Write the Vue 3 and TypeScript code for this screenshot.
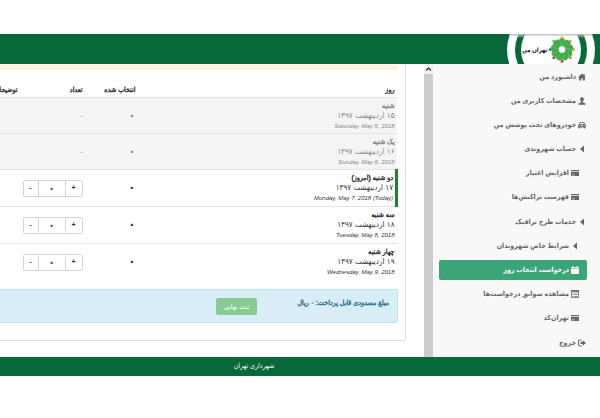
<script setup lang="ts">
import { ref } from 'vue'

type IconName = 'home' | 'user' | 'car' | 'caret' | 'card' | 'calendar' | 'list' | 'exit'

interface MenuItem {
  label: string
  icon: IconName
  nested?: boolean
  active?: boolean
  spaced?: boolean
}

interface DayRow {
  name: string
  date: string
  english: string
  state: 'past' | 'today' | 'open'
}

const menu: MenuItem[] = [
  { label: 'داشبورد من', icon: 'home' },
  { label: 'مشخصات کاربری من', icon: 'user' },
  { label: 'خودروهای تحت پوشش من', icon: 'car' },
  { label: 'حساب شهروندی', icon: 'caret' },
  { label: 'افزایش اعتبار', icon: 'card', nested: true },
  { label: 'فهرست تراکنش‌ها', icon: 'card', nested: true },
  { label: 'خدمات طرح ترافیک', icon: 'caret', spaced: true },
  { label: 'شرایط خاص شهروندان', icon: 'caret', nested: true },
  { label: 'درخواست انتخاب روز', icon: 'calendar', nested: true, active: true },
  { label: 'مشاهده سوابق درخواست‌ها', icon: 'list', nested: true },
  { label: 'تهران‌کد', icon: 'card', nested: true },
  { label: 'خروج', icon: 'exit', spaced: true },
]

const icons: Record<IconName, string> = {
  home: 'M8 1 0 8.5h2.2V15h4.3v-4.5h3V15h4.3V8.5H16l-2.8-2.7V2h-2.2v1.8z',
  user: 'M8 0.5c-2.6 0-3.8 1.9-3.6 4.3.2 2 .9 3.5 2 4.4v1.5L1 12.8V15.5h14v-2.7l-5.4-2.1V9.2c1.1-.9 1.8-2.4 2-4.4.2-2.4-1-4.3-3.6-4.3z',
  car: 'M3.8 2h8.4l1.7 4.5 2.1 1.3v5h-1.5V15h-2.8v-2.2H4.3V15H1.5v-2.2H0v-5l2.1-1.3zM5 3.7 4 6.5h8l-1-2.8zM3 8.4a1.2 1.2 0 1 0 .01 0zM13 8.4a1.2 1.2 0 1 0 .01 0zM5.5 9v1.5h5V9z',
  caret: 'M12 1v14L4 8z',
  card: 'M0 2h16v2.4H0zM0 6h16v8H0zM2 11v1.5h5V11z',
  calendar: 'M0 2.5h3V0h2v2.5h6V0h2v2.5h3V5H0zM0 6.2h16V16H0z',
  list: 'M0 0h16v16H0zM1.5 3.5v11h13v-11zM3 5h2v2H3zM6.5 5H13v1.5H6.5zM3 8.5h2v2H3zM6.5 8.5H13V10H6.5zM3 12h2v1.5H3zM6.5 12H13v1.5H6.5z',
  exit: 'M7 1H3.5A3.5 3.5 0 0 0 0 4.5v7A3.5 3.5 0 0 0 3.5 15H7v-2H3.5A1.5 1.5 0 0 1 2 11.5v-7A1.5 1.5 0 0 1 3.5 3H7zM9.5 2.5 16 8l-6.5 5.5V10H5V6h4.5z',
}

const days: DayRow[] = [
  { name: 'شنبه', date: '۱۵ اردیبهشت ۱۳۹۷', english: 'Saturday, May 5, 2018', state: 'past' },
  { name: 'یک شنبه', date: '۱۶ اردیبهشت ۱۳۹۷', english: 'Sunday, May 6, 2018', state: 'past' },
  { name: 'دو شنبه (امروز)', date: '۱۷ اردیبهشت ۱۳۹۷', english: 'Monday, May 7, 2018 (Today)', state: 'today' },
  { name: 'سه شنبه', date: '۱۸ اردیبهشت ۱۳۹۷', english: 'Tuesday, May 8, 2018', state: 'open' },
  { name: 'چهار شنبه', date: '۱۹ اردیبهشت ۱۳۹۷', english: 'Wednesday, May 9, 2018', state: 'open' },
]

const counts = ref<number[]>(days.map(() => 0))

const toPersian = (n: number): string => String(n).replace(/\d/g, (d) => '۰۱۲۳۴۵۶۷۸۹'[Number(d)])

function change(index: number, step: number): void {
  counts.value[index] = Math.max(0, counts.value[index] + step)
}

const petals = [0, 40, 80, 120, 160, 200, 240, 280, 320]
const dots = [
  { angle: 0, color: '#e8b52c' },
  { angle: 45, color: '#f0a02c' },
  { angle: 90, color: '#e0a53a' },
  { angle: 135, color: '#e8742a' },
  { angle: 180, color: '#d83a2e' },
  { angle: 225, color: '#8a4a9c' },
  { angle: 270, color: '#3a70b8' },
  { angle: 315, color: '#45b5c4' },
]
</script>

<template>
  <div class="page" dir="rtl">
    <header class="topbar">
      <svg class="brand" viewBox="0 0 88 30" role="img" aria-label="تهران من">
        <defs>
          <linearGradient id="edge" x1="0" y1="0" x2="0" y2="1">
            <stop offset="0" stop-color="#b4b4b4" />
            <stop offset="1" stop-color="#ffffff" stop-opacity="0" />
          </linearGradient>
          <clipPath id="disc"><circle cx="44" cy="16" r="44" /></clipPath>
        </defs>
        <circle cx="44" cy="16" r="44" fill="#fff" />
        <circle cx="44" cy="16" r="36" fill="#076839" />
        <circle cx="44" cy="16" r="30" fill="#fff" />
        <rect width="88" height="4" fill="url(#edge)" clip-path="url(#disc)" />
        <text class="brand-text" x="28" y="18" text-anchor="middle">تهران من</text>
        <g transform="translate(55 15.5)">
          <circle
            v-for="d in dots" :key="d.angle" cx="0" cy="-11.7" r="1.5"
            :fill="d.color" :transform="`rotate(${d.angle})`"
          />
          <path
            v-for="p in petals" :key="p" :transform="`rotate(${p})`"
            d="M-1-2.5C-5.500-4-5.500-9.500-1-11.300 4-11.500 5.500-7.500 2-3.500z" fill="#43ac49" stroke="#8fd08e" stroke-width=".3"
          />
          <circle r="3.2" fill="#fff" />
        </g>
      </svg>
    </header>

    <div class="body">
      <nav class="sidebar">
        <a
          v-for="item in menu" :key="item.label" href="#" class="item"
          :class="{ nested: item.nested, active: item.active, spaced: item.spaced }"
        >
          <svg class="icon" viewBox="0 0 16 16" aria-hidden="true">
            <path :d="icons[item.icon]" fill="currentColor" fill-rule="evenodd" />
          </svg>
          <span>{{ item.label }}</span>
        </a>
      </nav>

      <div class="scrollbar" aria-hidden="true">
        <svg class="up" viewBox="0 0 9 9"><path d="M2 6l2.5-2.5L7 6" fill="none" stroke="#444" stroke-width="1.5" /></svg>
        <div class="thumb"></div>
      </div>

      <main class="main">
        <section class="card">
          <div class="notice"></div>
          <table class="days">
            <thead>
              <tr>
                <th class="c-day">روز</th>
                <th class="c-selected">انتخاب شده</th>
                <th class="c-count">تعداد</th>
                <th class="c-note">توضیحات</th>
              </tr>
            </thead>
            <tbody>
              <tr v-for="(day, i) in days" :key="day.english" :class="day.state">
                <td class="day">
                  <strong>{{ day.name }}</strong>
                  <span>{{ day.date }}</span>
                  <em dir="ltr">{{ day.english }}</em>
                </td>
                <td class="num">۰</td>
                <td>
                  <template v-if="day.state === 'past'">-</template>
                  <div v-else class="stepper">
                    <button type="button" aria-label="افزایش" @click="change(i, 1)">+</button>
                    <input type="text" readonly :value="toPersian(counts[i])" :aria-label="day.name" />
                    <button type="button" class="minus" aria-label="کاهش" @click="change(i, -1)">-</button>
                  </div>
                </td>
                <td></td>
              </tr>
            </tbody>
          </table>
          <div class="total">
            <strong>مبلغ مسدودی قابل پرداخت: ۰ ریال</strong>
            <button type="button" class="submit">ثبت نهایی</button>
          </div>
        </section>
      </main>
    </div>

    <footer class="footer">شهرداری تهران</footer>
  </div>
</template>

<style>
body {
  background: #fff;
}
</style>

<style scoped>
.page {
  padding: 34px 0 42px;
  overflow: hidden;
  font-family: "Liberation Sans", "DejaVu Sans Condensed", "DejaVu Sans", sans-serif;
  font-size: 7px;
  line-height: 10px;
  color: #333;
}
.page * {
  box-sizing: border-box;
}
button,
input {
  font: inherit;
}
.topbar {
  display: flex;
  height: 30px;
  padding-right: 5px;
  background: #076839;
}
.brand {
  width: 88px;
  height: 30px;
}
.brand-text {
  font-size: 6px;
  font-weight: bold;
  fill: #111;
}
.body {
  display: flex;
}
.sidebar {
  flex: none;
  width: 167px;
  padding: 3px 13px 0 6px;
  background: #f8f8f8;
}
.item {
  display: flex;
  align-items: center;
  gap: 2px;
  height: 20px;
  margin-bottom: 4px;
  padding-right: 1px;
  border-radius: 2px;
  color: #666;
  font-weight: bold;
  text-decoration: none;
  white-space: nowrap;
}
.item:last-child {
  margin-bottom: 0;
}
.item.spaced {
  margin-top: 5px;
}
.item.nested {
  padding-right: 8px;
}
.item.active {
  background: #3ba579;
  color: #fff;
}
.icon {
  flex: none;
  width: 8px;
  height: 8px;
}
.scrollbar {
  display: flex;
  flex: none;
  flex-direction: column;
  width: 9px;
  background: #f1f1f1;
}
.up {
  width: 9px;
  height: 10px;
}
.thumb {
  flex: 1;
  background: #cdcdcd;
}
.main {
  flex: 1;
  min-width: 0;
  padding: 0 18px 16px 0;
  overflow: hidden;
}
.card {
  padding: 1px 7px 17px 0;
  border: solid #ddd;
  border-width: 0 1px 1px 0;
  border-radius: 0 0 3px 0;
}
.notice {
  height: 5px;
  background: #fcf4dc;
}
.days {
  width: 480px;
  margin-top: 10px;
  border-collapse: collapse;
  table-layout: fixed;
}
th,
.day strong,
.total strong {
  font-weight: normal;
  -webkit-text-stroke: 0.4px currentColor;
}
th {
  height: 17px;
  padding: 3px 2px 0;
  text-align: right;
  vertical-align: middle;
  white-space: nowrap;
}
.c-day {
  width: 259px;
}
.c-selected {
  width: 53px;
}
.c-count {
  width: 65px;
}
td {
  height: 37px;
  padding: 2px 2px 1px;
  border-top: 1px solid #e3e3e3;
  vertical-align: middle;
}
.past {
  background: #f4f4f4;
  color: #888;
}
.past td {
  height: 36px;
}
.today .day {
  border-right: 3px solid #1c8425;
}
.day strong,
.day span,
.day em {
  display: block;
}
.day span {
  font-size: 8px;
}
.day em {
  font-size: 6px;
  text-align: right;
}
.num {
  font-size: 13px;
  font-weight: bold;
}
.stepper {
  display: flex;
  width: 60px;
  height: 17px;
  border: 1px solid #d4d4d4;
  border-radius: 2px;
}
.stepper button {
  flex: none;
  width: 16px;
  padding: 0;
  border: 0;
  background: #fff;
  color: #333;
  font-weight: bold;
}
.stepper .minus {
  width: 14px;
}
.stepper input {
  flex: 1;
  min-width: 0;
  padding: 0;
  border: solid #d4d4d4;
  border-width: 0 1px;
  background: #fff;
  color: #555;
  font-size: 13px;
  font-weight: bold;
  text-align: center;
}
.total {
  display: flex;
  justify-content: space-between;
  height: 34px;
  margin-top: 9px;
  padding: 8px 8px 8px 216px;
  border: solid #bfe3ee;
  border-width: 1px 1px 1px 0;
  border-radius: 0 2px 2px 0;
  background: #d9edf7;
  color: #31708f;
}
.submit {
  width: 41px;
  height: 17px;
  padding: 0;
  border: 0;
  border-radius: 2px;
  background: #86cb92;
  color: #fff;
}
.footer {
  height: 19px;
  padding-right: 92px;
  background: #076839;
  color: #fff;
  line-height: 18px;
  text-align: center;
}
</style>
